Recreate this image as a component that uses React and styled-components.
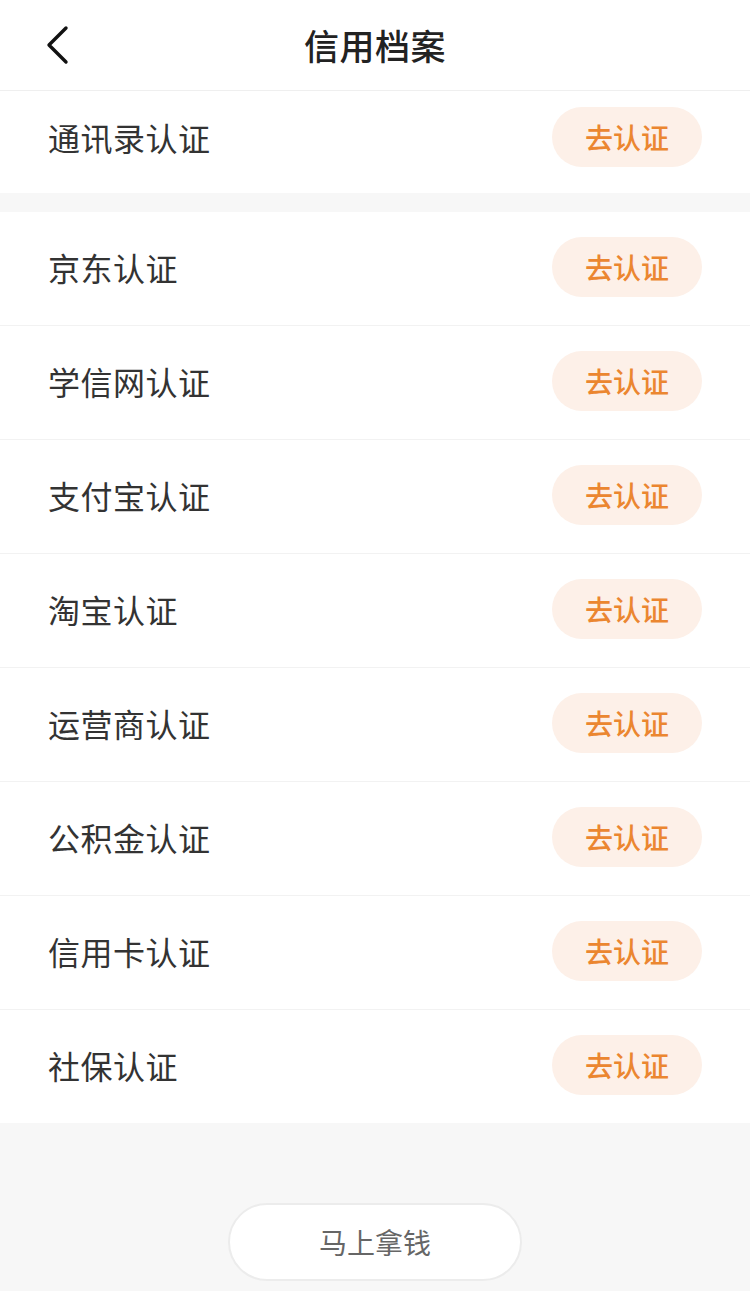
import React from "react";
import styled, { createGlobalStyle } from "styled-components";

const GlobalStyle = createGlobalStyle`
  *, *::before, *::after {
    box-sizing: border-box;
  }
  html, body {
    margin: 0;
    padding: 0;
    background: #f7f7f7;
  }
  body {
    font-family: "Noto Sans CJK SC", "Noto Sans", sans-serif;
  }
`;

const Page = styled.div`
  width: 750px;
  min-height: 1291px;
  background: #f7f7f7;
  display: flex;
  flex-direction: column;
`;

const Header = styled.header`
  height: 91px;
  background: #fff;
  border-bottom: 1px solid #efefef;
  display: flex;
  align-items: center;
  justify-content: center;
  position: relative;
`;

const BackButton = styled.button`
  position: absolute;
  left: 36px;
  top: 20px;
  width: 44px;
  height: 50px;
  padding: 0;
  border: none;
  background: none;
  display: flex;
  align-items: center;
  justify-content: center;
`;

const Title = styled.h1`
  margin: 0;
  font-size: 35px;
  font-weight: 500;
  color: #222;
  letter-spacing: 0.5px;
  padding-bottom: 2px;
`;

const Section = styled.section`
  background: #fff;
  margin-top: ${(p) => p.gap || 0}px;
  padding-bottom: ${(p) => p.bottomPad || 0}px;
`;

const Row = styled.div`
  height: ${(p) => p.height}px;
  padding: 0 48px 4px;
  display: flex;
  align-items: center;
  justify-content: space-between;
  border-top: ${(p) => (p.divided ? "1px solid #f2f2f2" : "none")};
`;

const Label = styled.span`
  font-size: 32px;
  line-height: 40px;
  color: #333;
  letter-spacing: 0.5px;
`;

const VerifyButton = styled.button`
  width: 150px;
  height: 60px;
  border: none;
  border-radius: 30px;
  background: #fdf0e8;
  color: #eb8630;
  font-family: inherit;
  font-size: 28px;
  font-weight: 500;
  padding: 0;
`;

const Footer = styled.div`
  display: flex;
  justify-content: center;
  padding-top: 80px;
  padding-bottom: 10px;
`;

const MainButton = styled.button`
  width: 294px;
  height: 78px;
  border-radius: 39px;
  border: 2px solid #ececec;
  background: #fff;
  color: #666;
  font-family: inherit;
  font-size: 28px;
  padding: 0;
`;

const items = [
  "京东认证",
  "学信网认证",
  "支付宝认证",
  "淘宝认证",
  "运营商认证",
  "公积金认证",
  "信用卡认证",
  "社保认证",
];

export default function App() {
  return (
    <Page>
      <GlobalStyle />
      <Header>
        <BackButton aria-label="返回">
          <svg width="24" height="40" viewBox="0 0 24 40">
            <path
              d="M20 3 L3 20 L20 37"
              fill="none"
              stroke="#111"
              strokeWidth="3.4"
              strokeLinecap="round"
              strokeLinejoin="round"
            />
          </svg>
        </BackButton>
        <Title>信用档案</Title>
      </Header>
      <Section bottomPad={6}>
        <Row height={96}>
          <Label>通讯录认证</Label>
          <VerifyButton>去认证</VerifyButton>
        </Row>
      </Section>
      <Section gap={19}>
        {items.map((name, i) => (
          <Row key={name} height={i === 0 ? 113 : 114} divided={i > 0}>
            <Label>{name}</Label>
            <VerifyButton>去认证</VerifyButton>
          </Row>
        ))}
      </Section>
      <Footer>
        <MainButton>马上拿钱</MainButton>
      </Footer>
    </Page>
  );
}
